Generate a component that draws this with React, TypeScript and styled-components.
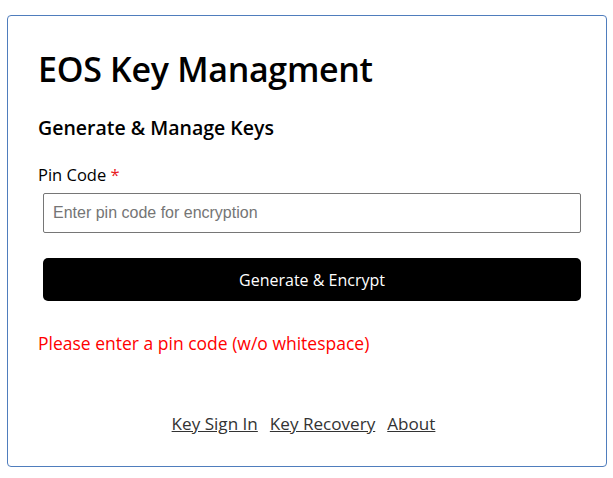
import React, { useState } from "react";
import styled, { createGlobalStyle } from "styled-components";

const GlobalStyle = createGlobalStyle`
  html, body {
    margin: 0;
    padding: 0;
    background: #ffffff;
  }
  * {
    box-sizing: border-box;
  }
`;

const Page = styled.div`
  padding: 15px 6px 0 7px;
  font-family: "Open Sans", "Liberation Sans", sans-serif;
`;

const Card = styled.main`
  height: 452px;
  border: 1px solid #4f7dbd;
  border-radius: 4px;
  padding: 32px 25px 30px 30px;
  display: flex;
  flex-direction: column;
`;

const Title = styled.h1`
  margin: 0;
  font-size: 34px;
  font-weight: 600;
  line-height: 42px;
  color: #000;
  letter-spacing: -0.3px;
`;

const Subtitle = styled.h2`
  margin: 25px 0 0;
  font-size: 19.5px;
  font-weight: 600;
  line-height: 26px;
  color: #000;
`;

const Label = styled.label`
  display: block;
  margin-top: 23px;
  font-size: 16.5px;
  line-height: 22px;
  color: #000;
`;

const Required = styled.span`
  color: #e8201c;
`;

const Input = styled.input`
  display: block;
  margin: 7px 0 0 5px;
  width: 538px;
  height: 40px;
  padding: 0 9px;
  border: 1px solid #767676;
  border-radius: 2px;
  font-family: "Liberation Sans", Arial, sans-serif;
  font-size: 16px;
  color: #000;
  outline: none;
  &::placeholder {
    color: #757575;
  }
`;

const Button = styled.button`
  display: block;
  margin: 25px 0 0 5px;
  width: 538px;
  height: 43px;
  border: none;
  border-radius: 5px;
  background: #000;
  color: #fff;
  font-family: "Open Sans", "Liberation Sans", sans-serif;
  font-size: 16px;
  cursor: pointer;
`;

const ErrorText = styled.p`
  margin: 30px 0 0;
  font-size: 17.5px;
  line-height: 24px;
  color: #ff0000;
`;

const Footer = styled.nav`
  margin-top: auto;
  padding-right: 12px;
  display: flex;
  justify-content: center;
  gap: 12px;
`;

const FooterLink = styled.a`
  font-size: 17.1px;
  line-height: 24px;
  color: #333;
  text-decoration: underline;
  cursor: pointer;
`;

export default function App() {
  const [pin, setPin] = useState("");

  return (
    <>
      <GlobalStyle />
      <Page>
        <Card>
          <Title>EOS Key Managment</Title>
          <Subtitle>Generate &amp; Manage Keys</Subtitle>
          <Label htmlFor="pin">
            Pin Code <Required>*</Required>
          </Label>
          <Input
            id="pin"
            value={pin}
            onChange={(e) => setPin(e.target.value)}
            placeholder="Enter pin code for encryption"
          />
          <Button>Generate &amp; Encrypt</Button>
          <ErrorText>Please enter a pin code (w/o whitespace)</ErrorText>
          <Footer>
            <FooterLink>Key Sign In</FooterLink>
            <FooterLink>Key Recovery</FooterLink>
            <FooterLink>About</FooterLink>
          </Footer>
        </Card>
      </Page>
    </>
  );
}
